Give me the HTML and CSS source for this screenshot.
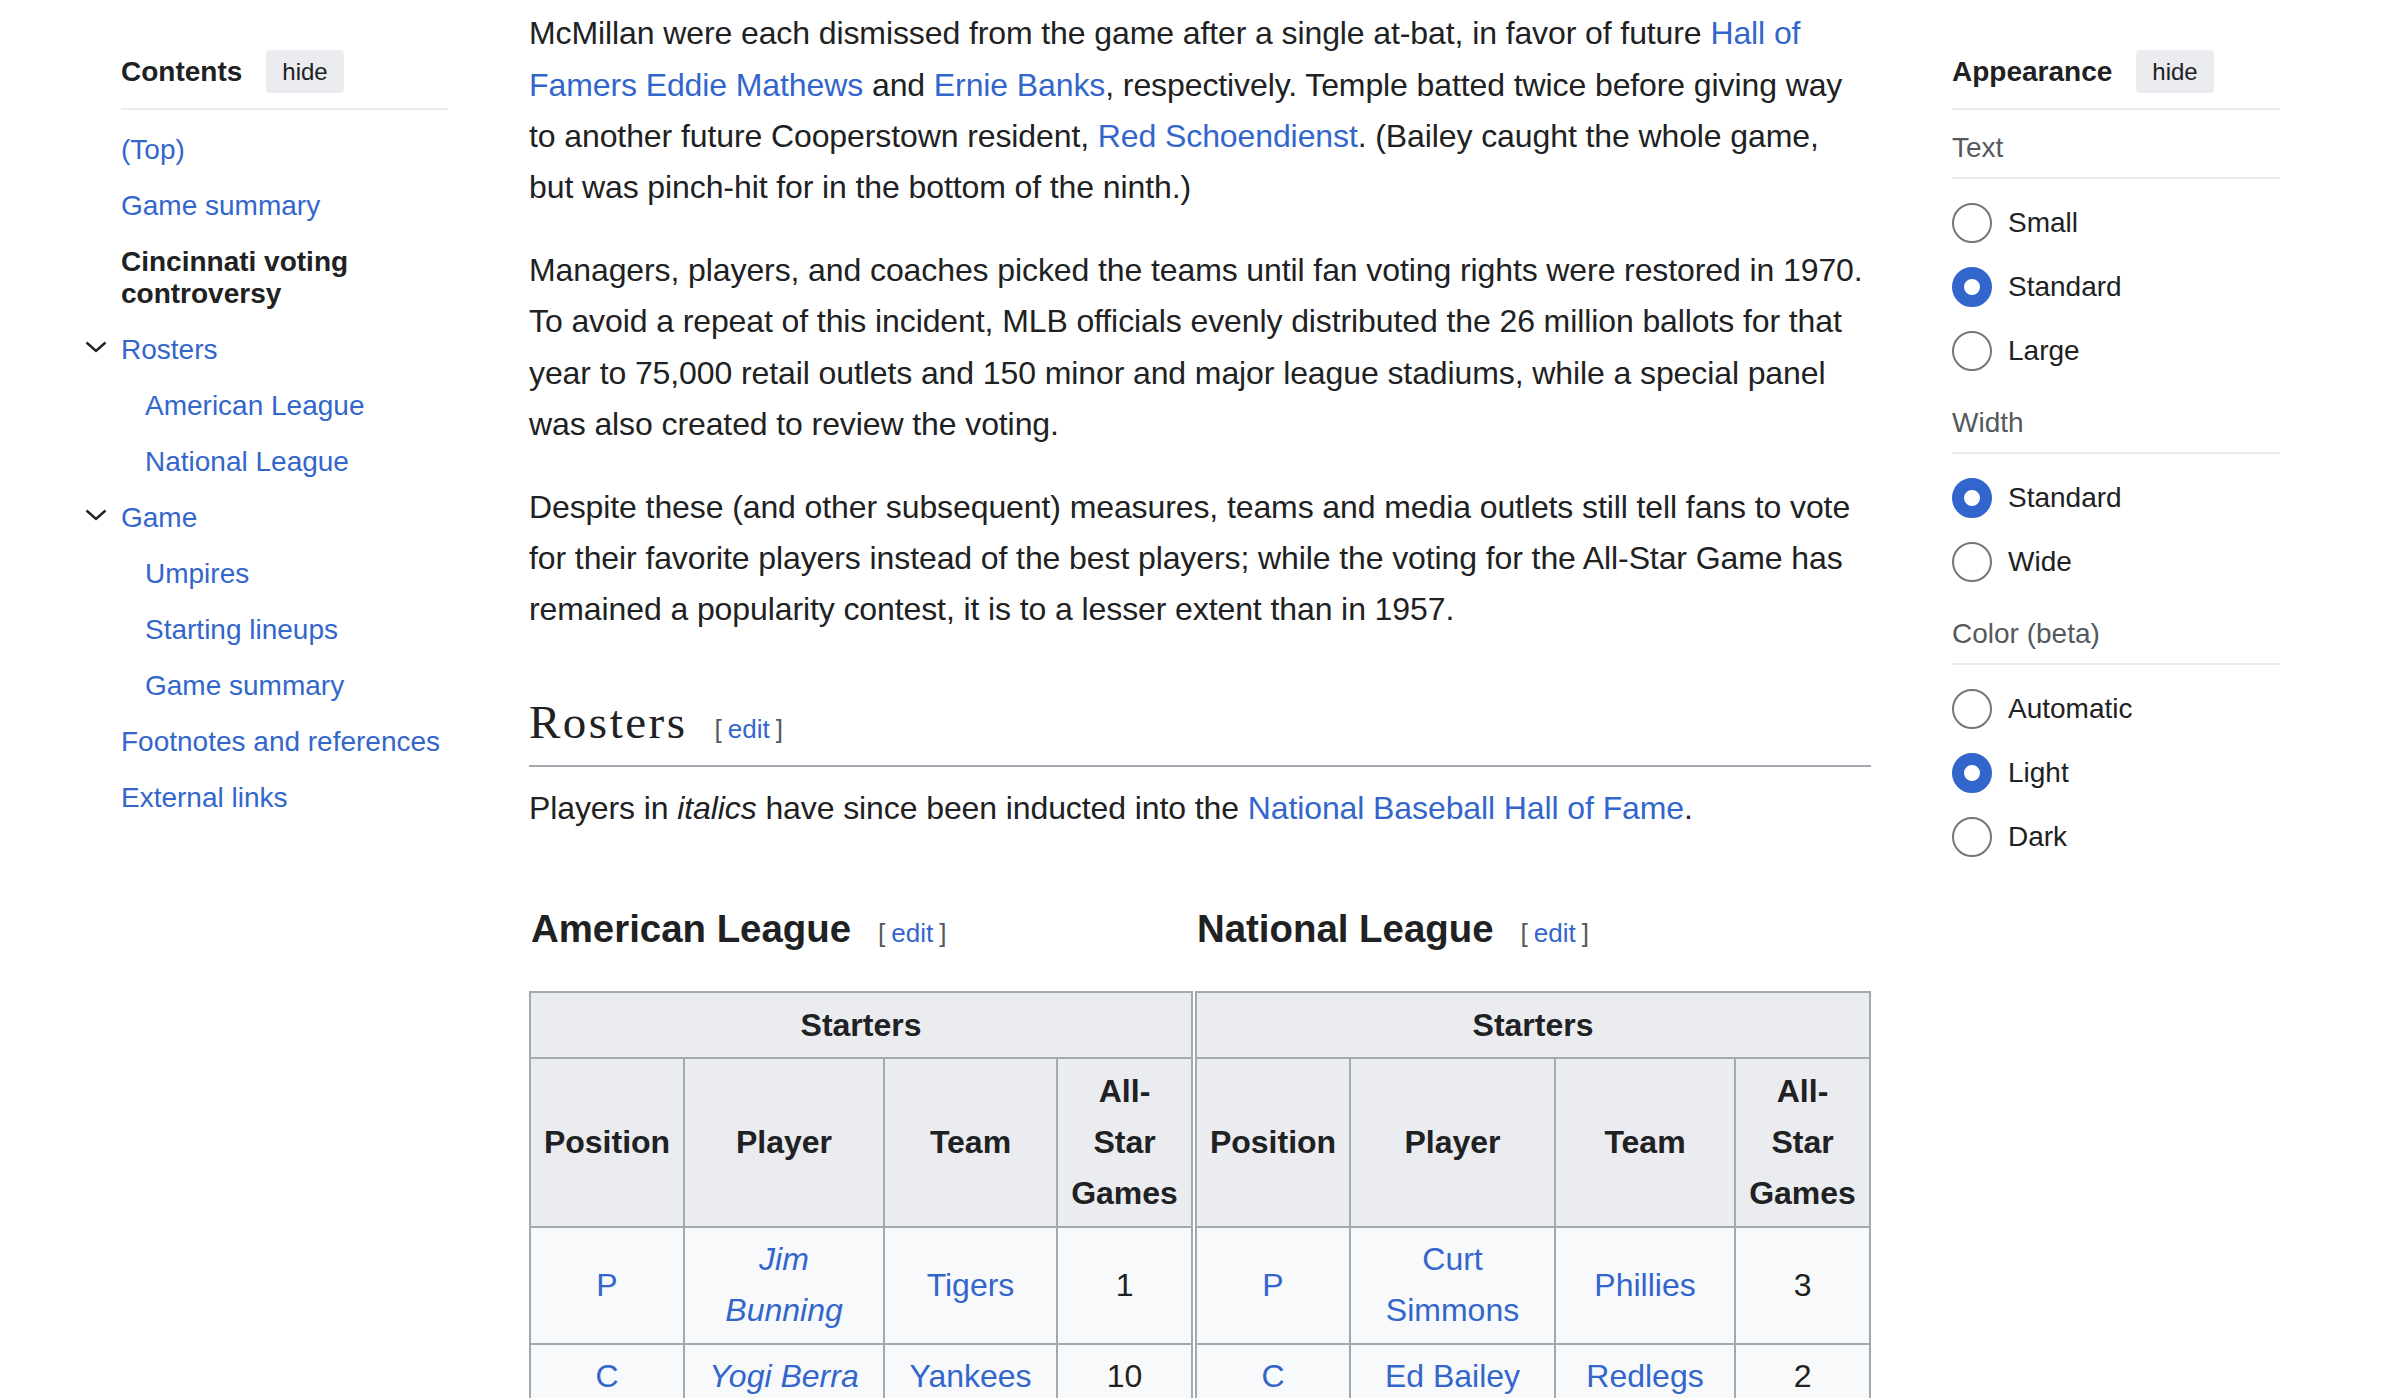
FILE: index.html
```html
<!DOCTYPE html>
<html lang="en">
<head>
<meta charset="utf-8">
<title>1957 Major League Baseball All-Star Game</title>
<link rel="stylesheet" href="styles.css">
</head>
<body>
<div class="page">
  <nav class="toc">
    <div class="pane-head">
      <span class="pane-title">Contents</span>
      <button class="hide-btn">hide</button>
    </div>
    <ul class="toc-list">
      <li class="toc-item"><a href="#">(Top)</a></li>
      <li class="toc-item"><a href="#">Game summary</a></li>
      <li class="toc-item active"><a href="#">Cincinnati voting controversy</a></li>
      <li class="toc-group">
        <div class="toc-item toc-row">
          <span class="toc-toggle"><svg width="22" height="12" viewBox="0 0 22 12"><path d="M1.5 1.5 L11 10 L20.5 1.5" fill="none" stroke="#202122" stroke-width="2.4"/></svg></span>
          <a href="#">Rosters</a>
        </div>
        <ul class="toc-sub">
          <li class="toc-item"><a href="#">American League</a></li>
          <li class="toc-item"><a href="#">National League</a></li>
        </ul>
      </li>
      <li class="toc-group">
        <div class="toc-item toc-row">
          <span class="toc-toggle"><svg width="22" height="12" viewBox="0 0 22 12"><path d="M1.5 1.5 L11 10 L20.5 1.5" fill="none" stroke="#202122" stroke-width="2.4"/></svg></span>
          <a href="#">Game</a>
        </div>
        <ul class="toc-sub">
          <li class="toc-item"><a href="#">Umpires</a></li>
          <li class="toc-item"><a href="#">Starting lineups</a></li>
          <li class="toc-item"><a href="#">Game summary</a></li>
        </ul>
      </li>
      <li class="toc-item"><a href="#">Footnotes and references</a></li>
      <li class="toc-item"><a href="#">External links</a></li>
    </ul>
  </nav>

  <main class="content">
    <p class="first">the other Reds starters (Bailey, Temple, Hoak) took the field as planned. Hoak and Roy<br>McMillan were each dismissed from the game after a single at-bat, in favor of future <a href="#">Hall of Famers</a> <a href="#">Eddie Mathews</a> and <a href="#">Ernie Banks</a>, respectively. Temple batted twice before giving way to another future Cooperstown resident, <a href="#">Red Schoendienst</a>. (Bailey caught the whole game, but was pinch-hit for in the bottom of the ninth.)</p>
    <p>Managers, players, and coaches picked the teams until fan voting rights were restored in 1970. To avoid a repeat of this incident, MLB officials evenly distributed the 26 million ballots for that year to 75,000 retail outlets and 150 minor and major league stadiums, while a special panel was also created to review the voting.</p>
    <p>Despite these (and other subsequent) measures, teams and media outlets still tell fans to vote for their favorite players instead of the best players; while the voting for the All-Star Game has remained a popularity contest, it is to a lesser extent than in 1957.</p>

    <h2 class="section-title">Rosters<span class="editsection"><span class="bracket">[</span><a href="#">edit</a><span class="bracket">]</span></span></h2>
    <p>Players in <i>italics</i> have since been inducted into the <a href="#">National Baseball Hall of Fame</a>.</p>

    <div class="leagues">
      <div class="league league-al">
        <h3 class="league-title">American League<span class="editsection small"><span class="bracket">[</span><a href="#">edit</a><span class="bracket">]</span></span></h3>
        <table class="wikitable">
          <colgroup><col class="c-pos"><col class="c-player-al"><col class="c-team-al"><col class="c-games"></colgroup>
          <tr><th colspan="4">Starters</th></tr>
          <tr><th>Position</th><th>Player</th><th>Team</th><th>All-Star Games</th></tr>
          <tr><td><a href="#">P</a></td><td><i><a href="#">Jim Bunning</a></i></td><td><a href="#">Tigers</a></td><td>1</td></tr>
          <tr><td><a href="#">C</a></td><td><i><a href="#">Yogi Berra</a></i></td><td><a href="#">Yankees</a></td><td>10</td></tr>
          <tr><td><a href="#">1B</a></td><td><a href="#">Vic Power</a></td><td><a href="#">Athletics</a></td><td>3</td></tr>
        </table>
      </div>
      <div class="league league-nl">
        <h3 class="league-title">National League<span class="editsection small"><span class="bracket">[</span><a href="#">edit</a><span class="bracket">]</span></span></h3>
        <table class="wikitable">
          <colgroup><col class="c-pos"><col class="c-player-nl"><col class="c-team-nl"><col class="c-games"></colgroup>
          <tr><th colspan="4">Starters</th></tr>
          <tr><th>Position</th><th>Player</th><th>Team</th><th>All-Star Games</th></tr>
          <tr><td><a href="#">P</a></td><td><a href="#">Curt Simmons</a></td><td><a href="#">Phillies</a></td><td>3</td></tr>
          <tr><td><a href="#">C</a></td><td><a href="#">Ed Bailey</a></td><td><a href="#">Redlegs</a></td><td>2</td></tr>
          <tr><td><a href="#">1B</a></td><td><i><a href="#">Stan Musial</a></i></td><td><a href="#">Cardinals</a></td><td>11</td></tr>
        </table>
      </div>
    </div>
  </main>

  <aside class="appearance">
    <div class="pane-head">
      <span class="pane-title">Appearance</span>
      <button class="hide-btn">hide</button>
    </div>
    <div class="app-group">
      <div class="app-label">Text</div>
      <ul class="radio-list">
        <li class="radio-row"><span class="radio"></span><span class="radio-label">Small</span></li>
        <li class="radio-row"><span class="radio checked"></span><span class="radio-label">Standard</span></li>
        <li class="radio-row"><span class="radio"></span><span class="radio-label">Large</span></li>
      </ul>
    </div>
    <div class="app-group">
      <div class="app-label">Width</div>
      <ul class="radio-list">
        <li class="radio-row"><span class="radio checked"></span><span class="radio-label">Standard</span></li>
        <li class="radio-row"><span class="radio"></span><span class="radio-label">Wide</span></li>
      </ul>
    </div>
    <div class="app-group">
      <div class="app-label">Color (beta)</div>
      <ul class="radio-list">
        <li class="radio-row"><span class="radio"></span><span class="radio-label">Automatic</span></li>
        <li class="radio-row"><span class="radio checked"></span><span class="radio-label">Light</span></li>
        <li class="radio-row"><span class="radio"></span><span class="radio-label">Dark</span></li>
      </ul>
    </div>
  </aside>
</div>
</body>
</html>
```
FILE: styles.css
```css
* { box-sizing: border-box; }

html, body {
  margin: 0;
  padding: 0;
  background: #ffffff;
}

body {
  font-family: "Liberation Sans", Arial, Helvetica, sans-serif;
  color: #202122;
  height: 1398px;
  overflow: hidden;
}

a { color: #3366cc; text-decoration: none; }

ul { list-style: none; margin: 0; padding: 0; }

.page {
  display: grid;
  grid-template-columns: 327px 1342px 328px;
  column-gap: 81px;
  padding-left: 121px;
  align-items: start;
}

/* ---------- side panes ---------- */
.pane-head {
  display: flex;
  align-items: center;
  gap: 24px;
  padding: 50px 0 15px;
  border-bottom: 2px solid #eaecf0;
}

.pane-title {
  font-size: 28px;
  font-weight: bold;
  line-height: 43px;
}

.hide-btn {
  font-family: "Liberation Sans", Arial, sans-serif;
  font-size: 24px;
  color: #202122;
  background: #eaecf0;
  border: 0;
  border-radius: 4px;
  height: 43px;
  padding: 0 16px;
  line-height: 43px;
}

/* ---------- TOC ---------- */
.toc-list {
  margin-top: 11.5px;
  font-size: 28px;
  line-height: 32px;
}

.toc-item {
  padding: 12px 0;
}

.toc-item.active a {
  color: #202122;
  font-weight: bold;
}

.toc-row {
  display: flex;
  align-items: flex-start;
}

.toc-toggle {
  width: 36px;
  margin-left: -36px;
  flex: none;
  display: flex;
  padding-top: 7px;
}

.toc-toggle svg { display: block; }

.toc-sub {
  padding-left: 24px;
}

/* ---------- main content ---------- */
.content {
  font-size: 32px;
  line-height: 51.2px;
}

.content p {
  margin: 16px 0 32px;
  letter-spacing: -0.1px;
}

.content p.first {
  margin-top: -42.8px;
}

.section-title {
  font-family: "Liberation Serif", "Times New Roman", serif;
  font-weight: normal;
  font-size: 47px;
  letter-spacing: 2.5px;
  line-height: 77px;
  margin: 48px 0 16px;
  padding-bottom: 4px;
  border-bottom: 2px solid #a2a9b1;
}

.editsection {
  font-family: "Liberation Sans", Arial, sans-serif;
  font-size: 26px;
  font-weight: normal;
  letter-spacing: 0;
  line-height: 1;
  margin-left: 27px;
  color: #54595d;
}

.editsection.small { margin-left: 27px; }

.bracket { color: #54595d; }
.editsection .bracket:first-child { margin-right: 6px; }
.editsection .bracket:last-child { margin-left: 6px; }

.leagues {
  display: flex;
  gap: 4px;
}

.league-al { width: 662px; flex: none; }
.league-nl { width: 674px; flex: none; }

.league-title {
  font-size: 38.4px;
  line-height: 61.44px;
  font-weight: bold;
  margin: 32px 0 32px;
  padding-left: 2px;
}

.wikitable {
  width: 100%;
  table-layout: fixed;
  border-collapse: collapse;
  border: 2px solid #a2a9b1;
  background: #f8f9fa;
  font-size: 32px;
  line-height: 51.2px;
}

.wikitable th,
.wikitable td {
  border: 2px solid #a2a9b1;
  padding: 6.4px 12.8px;
  text-align: center;
  vertical-align: middle;
}

.wikitable th {
  background: #eaecf0;
  font-weight: bold;
}

.wikitable td { background: #f8f9fa; }

.c-pos { width: 154px; }
.c-player-al { width: 200px; }
.c-team-al { width: 173px; }
.c-player-nl { width: 205px; }
.c-team-nl { width: 180px; }
.c-games { width: 135px; }

/* ---------- appearance ---------- */
.app-group {
  padding-top: 18px;
}

.app-group + .app-group {
  padding-top: 20px;
}

.app-label {
  font-size: 28px;
  line-height: 40px;
  color: #54595d;
  padding-bottom: 9px;
  border-bottom: 2px solid #eaecf0;
}

.radio-list {
  margin-top: 12px;
}

.radio-row {
  height: 64px;
  display: flex;
  align-items: center;
  gap: 16px;
  font-size: 28px;
}

.radio {
  width: 40px;
  height: 40px;
  border-radius: 50%;
  border: 2px solid #72777d;
  background: #ffffff;
  flex: none;
}

.radio.checked {
  border: 12px solid #3366cc;
}
```
